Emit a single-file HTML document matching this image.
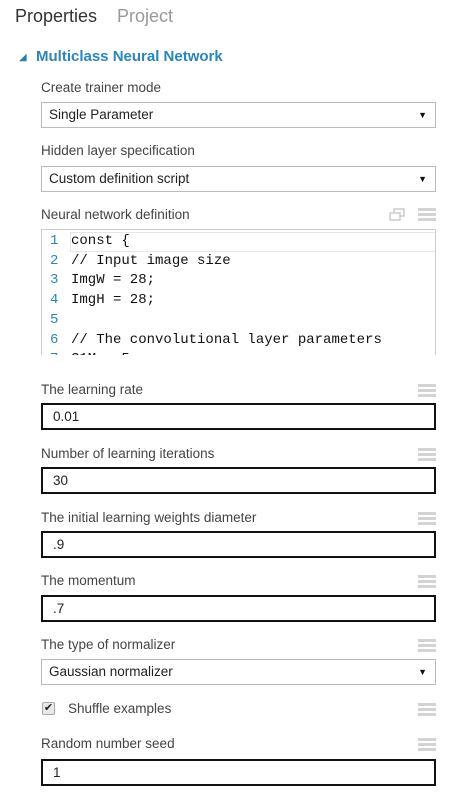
<!DOCTYPE html>
<html><head><style>
body{margin:0;width:470px;height:792px;background:#fff;font-family:"Liberation Sans",sans-serif;color:#333;position:relative;overflow:hidden}
.a{position:absolute}
.lbl{position:absolute;left:41px;font-size:13.5px;color:#444}
.sel,.inp{position:absolute;left:41px;width:395px;box-sizing:border-box;font-size:13.5px;padding-left:7px}
.sel{height:26px;border:1px solid #bbb;line-height:24px;color:#222}
.sel:after{content:"▼";position:absolute;right:8px;top:0;font-size:9px;color:#111}
.inp{height:27px;border:2px solid #111;line-height:23px;padding-left:10px;color:#222}
.ham{position:absolute;left:418px;width:18px;height:13px}
.ham i{position:absolute;left:0;width:18px;height:3px;background:#d3d3d3}
.code{position:absolute;left:41px;top:229px;width:395px;height:126px;border:1px solid #ccc;border-bottom:none;box-sizing:border-box;overflow:hidden;font-family:"Liberation Mono","DejaVu Sans Mono",monospace;font-size:14px}
.ln{position:absolute;left:8px;color:#2a86b8}
.ct{position:absolute;left:29px;color:#111;white-space:pre}
</style></head><body>
<div class="a" style="left:15px;top:6px;font-size:18px;color:#333">Properties</div>
<div class="a" style="left:117px;top:6px;font-size:18px;color:#999">Project</div>
<div class="a" style="left:19px;top:52px;font-size:10px;color:#2a7fae">◢</div>
<div class="a" style="left:36px;top:48px;font-size:15px;font-weight:bold;color:#2a86b8">Multiclass Neural Network</div>

<div class="lbl" style="top:80px">Create trainer mode</div>
<div class="sel" style="top:102px">Single Parameter</div>
<div class="lbl" style="top:143px">Hidden layer specification</div>
<div class="sel" style="top:166px">Custom definition script</div>

<div class="lbl" style="top:207px">Neural network definition</div>
<svg class="a" style="left:389px;top:208px" width="16" height="14"><rect x="5" y="1" width="10" height="7" fill="none" stroke="#ccc" stroke-width="1.5"/><rect x="1" y="5" width="10" height="7" fill="#fff" stroke="#ccc" stroke-width="1.5"/></svg>
<div class="ham" style="top:208px"><i style="top:0"></i><i style="top:5px"></i><i style="top:10px"></i></div>
<div class="code">
<div class="a" style="left:28px;top:2px;width:364px;height:18px;border:1px solid #e6e6e6"></div>
<div class="ln" style="top:3px">1</div><div class="ct" style="top:3px">const {</div>
<div class="ln" style="top:23px">2</div><div class="ct" style="top:23px">// Input image size</div>
<div class="ln" style="top:42px">3</div><div class="ct" style="top:42px">ImgW = 28;</div>
<div class="ln" style="top:62px">4</div><div class="ct" style="top:62px">ImgH = 28;</div>
<div class="ln" style="top:82px">5</div>
<div class="ln" style="top:102px">6</div><div class="ct" style="top:102px">// The convolutional layer parameters</div>
<div class="ln" style="top:121px">7</div><div class="ct" style="top:121px">C1M = 5</div>
</div>

<div class="lbl" style="top:382px">The learning rate</div>
<div class="ham" style="top:384px"><i style="top:0"></i><i style="top:5px"></i><i style="top:10px"></i></div>
<div class="inp" style="top:403px">0.01</div>

<div class="lbl" style="top:446px">Number of learning iterations</div>
<div class="ham" style="top:448px"><i style="top:0"></i><i style="top:5px"></i><i style="top:10px"></i></div>
<div class="inp" style="top:467px">30</div>

<div class="lbl" style="top:510px">The initial learning weights diameter</div>
<div class="ham" style="top:512px"><i style="top:0"></i><i style="top:5px"></i><i style="top:10px"></i></div>
<div class="inp" style="top:531px">.9</div>

<div class="lbl" style="top:573px">The momentum</div>
<div class="ham" style="top:575px"><i style="top:0"></i><i style="top:5px"></i><i style="top:10px"></i></div>
<div class="inp" style="top:595px">.7</div>

<div class="lbl" style="top:637px">The type of normalizer</div>
<div class="ham" style="top:639px"><i style="top:0"></i><i style="top:5px"></i><i style="top:10px"></i></div>
<div class="sel" style="top:659px">Gaussian normalizer</div>

<div class="a" style="left:42px;top:702px;width:11px;height:11px;border:1px solid #aaa;background:#e8e8e8;border-radius:2px;font-size:11px;line-height:11px;text-align:center;color:#222">✔</div>
<div class="lbl" style="left:68px;top:701px">Shuffle examples</div>
<div class="ham" style="top:703px"><i style="top:0"></i><i style="top:5px"></i><i style="top:10px"></i></div>

<div class="lbl" style="top:736px">Random number seed</div>
<div class="ham" style="top:738px"><i style="top:0"></i><i style="top:5px"></i><i style="top:10px"></i></div>
<div class="inp" style="top:759px">1</div>
</body></html>
